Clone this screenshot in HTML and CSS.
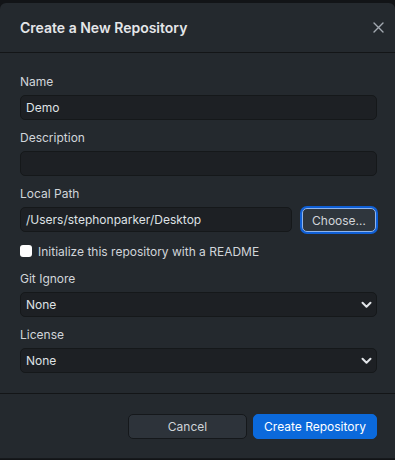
FILE: index.html
```html
<!DOCTYPE html>
<html lang="en">
<head>
    <meta charset="UTF-8">
    <meta name="viewport" content="width=device-width, initial-scale=1.0">
    <title>Create a New Repository</title>
    <link rel="stylesheet" href="styles.css">
</head>
<body>

    <div class="dialog">
        <div class="dialog-header">
            <h1>Create a New Repository</h1>
            <button class="close" aria-label="Close">
                <svg width="11" height="11" viewBox="0 0 11 11">
                    <path d="M1 1 L10 10 M10 1 L1 10" stroke="#a3a9b1" stroke-width="1.4" stroke-linecap="round"/>
                </svg>
            </button>
        </div>

        <div class="dialog-body">
            <div class="field">
                <label>Name</label>
                <div class="input">Demo</div>
            </div>

            <div class="field">
                <label>Description</label>
                <div class="input"></div>
            </div>

            <div class="field">
                <label>Local Path</label>
                <div class="path-row">
                    <div class="input">/Users/stephonparker/Desktop</div>
                    <button class="btn btn-focus">Choose…</button>
                </div>
            </div>

            <div class="check-row">
                <span class="checkbox"></span>
                <span>Initialize this repository with a README</span>
            </div>

            <div class="field">
                <label>Git Ignore</label>
                <div class="input select">
                    <span>None</span>
                    <svg width="11" height="8" viewBox="0 0 11 8">
                        <path d="M1.5 1.8 L5.5 5.8 L9.5 1.8" fill="none" stroke="#e1e4e8" stroke-width="2" stroke-linecap="round" stroke-linejoin="round"/>
                    </svg>
                </div>
            </div>

            <div class="field last">
                <label>License</label>
                <div class="input select">
                    <span>None</span>
                    <svg width="11" height="8" viewBox="0 0 11 8">
                        <path d="M1.5 1.8 L5.5 5.8 L9.5 1.8" fill="none" stroke="#e1e4e8" stroke-width="2" stroke-linecap="round" stroke-linejoin="round"/>
                    </svg>
                </div>
            </div>
        </div>

        <div class="dialog-footer">
            <button class="btn btn-cancel">Cancel</button>
            <button class="btn btn-primary">Create Repository</button>
        </div>
    </div>

</body>
</html>
```

FILE: styles.css
```css
* {
    margin: 0;
    padding: 0;
    box-sizing: border-box;
}

body {
    font-family: 'Inter', 'Noto Sans', sans-serif;
    font-size: 12px;
    color: #d6d9dd;
    background: #121417;
    height: 460px;
    overflow: hidden;
}

.dialog {
    margin-top: 3px;
    background-color: #24292e;
    border-radius: 6px 6px 0 0;
    border-bottom: 1px solid #16191c;
    height: 456px;
}

.dialog-header {
    display: flex;
    justify-content: space-between;
    align-items: center;
    height: 50px;
    padding: 0 11px 0 20px;
    border-bottom: 1px solid #131517;
}

h1 {
    font-size: 14px;
    font-weight: 600;
    color: #e4e6e9;
}

.close {
    background: none;
    border: none;
    width: 12px;
    height: 12px;
    display: flex;
    align-items: center;
    justify-content: center;
}

.dialog-body {
    padding: 21px 18px 20px 20px;
}

.field {
    display: flex;
    flex-direction: column;
    gap: 5px;
    margin-bottom: 10px;
}

.field.last {
    margin-bottom: 0;
}

label {
    line-height: 16px;
    color: #d1d5da;
}

.input {
    height: 25px;
    line-height: 23px;
    padding: 0 5px;
    background-color: #1d2024;
    border: 1px solid #15181a;
    border-radius: 5px;
    color: #dfe2e5;
}

.path-row {
    display: flex;
    gap: 10px;
}

.path-row .input {
    flex: 1;
}

.btn {
    font-family: inherit;
    font-size: 12px;
    height: 25px;
    border-radius: 5px;
    color: #dfe2e5;
}

.btn-focus {
    width: 74px;
    background-color: #2f363d;
    border: 1px solid #8fb4ec;
    box-shadow: 0 0 0 2px #0f5fd6;
    height: 24px;
    margin: 1px 1px 0 0;
    color: #d1d5da;
}

.check-row {
    display: flex;
    align-items: center;
    gap: 6px;
    height: 16px;
    margin: 11px 0 12px;
    color: #d1d5da;
}

.checkbox {
    width: 12px;
    height: 12px;
    background: #ffffff;
    border-radius: 3px;
}

.select {
    display: flex;
    justify-content: space-between;
    align-items: center;
    padding-right: 4px;
}

.dialog-footer {
    display: flex;
    justify-content: flex-end;
    gap: 6px;
    padding: 20px 18px 19px 0;
    border-top: 1px solid #131517;
}

.btn-cancel {
    width: 119px;
    background-color: #2d333a;
    border: 1px solid #15181b;
    color: #cfd3d8;
}

.btn-primary {
    width: 124px;
    background-color: #0b69db;
    border: 1px solid #0b69db;
    color: #ffffff;
}
```
